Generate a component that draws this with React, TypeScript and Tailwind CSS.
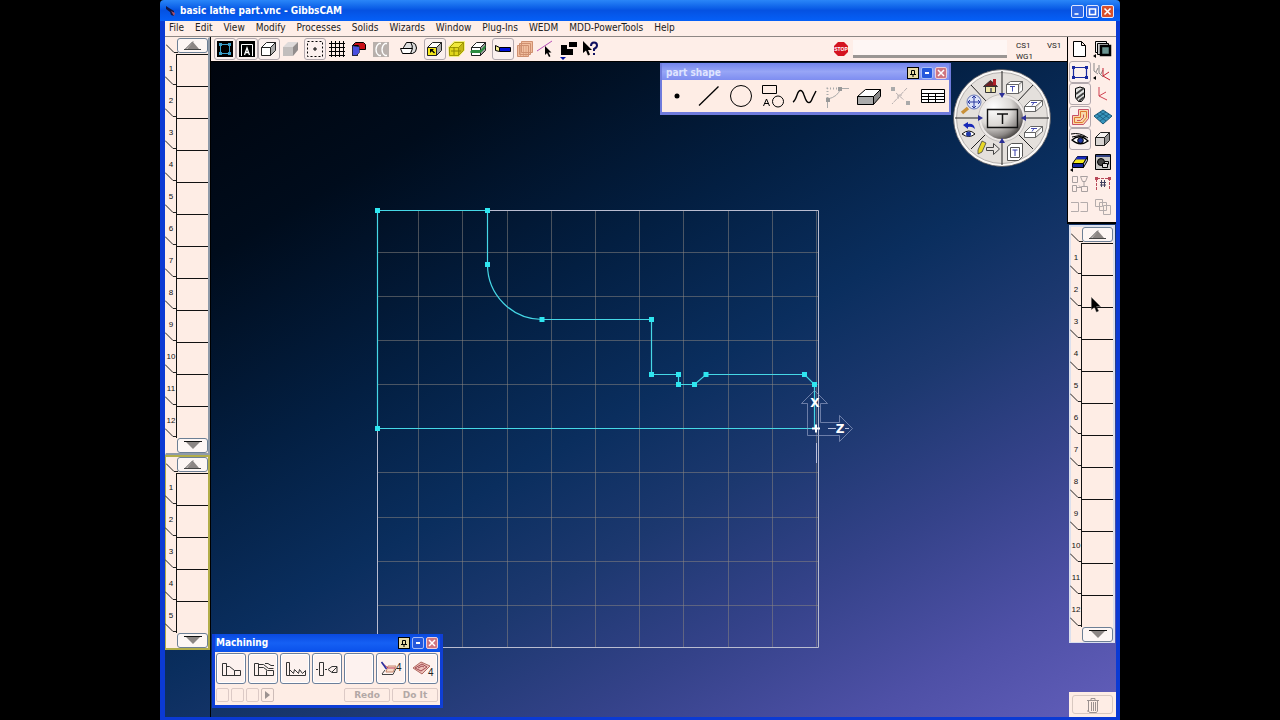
import type { ReactNode } from "react";

const MENUS = ["File", "Edit", "View", "Modify", "Processes", "Solids", "Wizards", "Window", "Plug-Ins", "WEDM", "MDD-PowerTools", "Help"];

type Tool = { name: string; art: ReactNode; on?: boolean };

function Art({ children, size = 22 }: { children: ReactNode; size?: number }) {
  return (
    <svg viewBox={`0 0 ${size} ${size}`} width={size} height={size} fill="none" stroke="#000" strokeWidth="1" className="block shrink-0" aria-hidden="true">
      {children}
    </svg>
  );
}

const Cube = ({ front = "#fff", top = "#fff", side = "#aaa", line = "#222" }: { front?: string; top?: string; side?: string; line?: string }) => (
  <g stroke={line} strokeLinejoin="round">
    <path d="M3.500 9.500h9v8h-9z" fill={front} />
    <path d="M3.500 9.500l5-5h9l-5 5z" fill={top} />
    <path d="M12.500 9.500l5-5v8l-5 5z" fill={side} />
  </g>
);

const GROUPS: { gap: string; tools: Tool[] }[] = [
  {
    gap: "",
    tools: [
      {
        name: "Workgroup geometry", on: true,
        art: (<><path d="M3 3h16v16H3z" fill="#000" stroke="none" /><path d="M6.500 6.500h9v9h-9z" stroke="#3aa0cc" /><path d="M5 5h3v3H5zM14 5h3v3h-3zM5 14h3v3H5zM14 14h3v3h-3z" fill="#3aa0cc" stroke="none" /></>),
      },
      {
        name: "Labels", on: true,
        art: (<><path d="M3 3h16v16H3z" fill="#000" stroke="none" /><path d="M5.500 18V6.500h11V18" stroke="#fff" /><path d="M8.500 17l2.500-7 2.500 7M9.500 14.500h3" stroke="#fff" strokeWidth="1.300" /></>),
      },
      { name: "Show solids", on: true, art: <Cube /> },
      { name: "Render solids", art: (<g stroke="none"><path d="M3 9h10v9H3z" fill="#c2bebd" /><path d="M3 9l5-5h10l-5 5z" fill="#dedada" /><path d="M13 9l5-5v8l-5 6z" fill="#918c8c" /></g>) },
    ],
  },
  {
    gap: "ml-0.5",
    tools: [
      { name: "Show points", on: true, art: (<><path d="M3.500 3.500h15v15h-15z" strokeDasharray="2 2" /><path d="M11 9v4M9 11h4" /></>) },
      { name: "Grid", art: <path d="M3 5.500h16M3 9.500h16M3 13.500h16M3 17.500h16M5.500 3v16M9.500 3v16M13.500 3v16M17.500 3v16" /> },
      { name: "Boolean", art: (<><path d="M4.500 7.500h5v10h-5z" fill="#3a40d8" /><path d="M4.500 7.500l3-3h8l2 2v5h-7v-4z" fill="#c81018" /><path d="M7.500 8.500h4v6l-3 3h-4v-10z" fill="#4a50e0" stroke="#222" strokeWidth=".6" /></>) },
      { name: "Threads", art: (<><path d="M3 4h16v15H3z" fill="#b8b0ac" stroke="none" /><path d="M17 5.500h-2q-3 2-3 6t3 6h2M11 5.500H9q-3 2-3 6t3 6h2" stroke="#fff" strokeWidth="1.300" /></>) },
    ],
  },
  { gap: "ml-1.5", tools: [{ name: "Chuck", art: (<><path d="M5.500 9.500l3-5h6q4 1 4 5.500t-4 5.500h-3z" fill="#ddd" /><path d="M13 5q2 3 1 6" /><path d="M2.500 10.500h12l-2 5h-8z" fill="#fff" /></>) }] },
  {
    gap: "ml-1",
    tools: [
      { name: "Face select", on: true, art: (<><Cube front="#f4e81c" /><path d="M6 11h4l-1.300 1.300 2.300 2.200-1 1-2.200-2.300L6 15z" fill="#000" stroke="none" /></>) },
      { name: "Highlight", art: (<><path d="M2 9l6-6h11v9l-6 7H3z" fill="#f3f080" stroke="none" /><Cube front="#e0d61c" top="#f0e83c" side="#c4b814" line="#a09800" /><path d="M5 13h10M8 9v8" stroke="#908800" /></>) },
      { name: "Slice", art: (<><Cube side="#999" /><path d="M2 14l1.500-2h9l5-5v3l-5 5H3z" fill="#2c8c40" stroke="none" /></>) },
    ],
  },
  {
    gap: "ml-0.5",
    tools: [
      { name: "Tool display", on: true, art: (<><path d="M7.500 9.500h11v4h-11z" fill="#0010d8" /><path d="M3.500 7.500l4 2v4l-4-1z" fill="#f4ee90" /></>) },
      { name: "Layers", art: (<g stroke="#cf9070" fill="#f2bf9f"><path d="M7.500 3.500h11v11h-11zM5.500 5.500h11v11h-11zM3.500 7.500h11v11h-11z" /><path d="M6.500 8v10M9.500 8v10M12 8v10" strokeWidth=".6" /></g>) },
      { name: "Pick edge", art: (<><path d="M1 13L16 3" stroke="#b850b8" /><path d="M9 8v9l2-2 2 4 1.500-.8-2-3.700h3z" fill="#000" stroke="none" /></>) },
      { name: "Machine setup", art: (<><path d="M3 7h6v4h6v6H3zM11 4h8v5h-8z" fill="#000" stroke="none" /><path d="M2 19h6l-3 3z" fill="#0010a0" stroke="none" /></>) },
      { name: "Context help", art: (<><path d="M3 3v12l3-2.500 2 5 2-1-2-4.500h4z" fill="#000" stroke="none" /><path d="M11 8q0-3.500 3-3.500t3 3q0 2-3 3.500v2M14 15v2" stroke="#101060" strokeWidth="2" /></>) },
    ],
  },
];

const SIDE_TOOLS: Tool[] = [
  { name: "Documents", art: <path d="M4.500 3.500h8l4 4v11h-12zM12.500 3.500v4h4" fill="#fff" /> },
  { name: "Workgroups", art: (<><path d="M3.500 3.500h11v11h-11z" fill="#eee" /><path d="M5.500 5.500h11v11h-11z" fill="#ccc" /><path d="M9 8h9v9H9z" fill="#6a9490" strokeWidth="2.500" /><path d="M1 18l3-2v4z" fill="#000" stroke="none" /></>) },
  { name: "Geometry", on: true, art: (<g stroke="#1828a0"><path d="M4.500 6.500h13v10h-13z" strokeWidth="1.200" /><path d="M3 5h3v3H3zM16 5h3v3h-3zM3 15h3v3H3zM16 15h3v3h-3z" fill="#1828a0" stroke="none" /></g>) },
  { name: "Coordinate systems", art: (<><path d="M2 2v8l4 3M7 4v8l4 4M4 11l2-4M9 13l2-4" stroke="#888" /><path d="M11 7v8l7 4M11 15l6-4" stroke="#c42030" /><path d="M1 17l3-2v4z" fill="#000" stroke="none" /></>) },
  { name: "Tools", on: true, art: (<><path d="M6.500 5.500q4.500-3 9 0v9l-3 4h-3l-3-4z" fill="#e4e4e4" /><path d="M7 11l8-6M7 16l8-6M10 18l5-4" stroke="#444" strokeWidth="2" /></>) },
  { name: "Coordinate system", art: <path d="M7 4v9l8 4M7 13l7-4" stroke="#d04050" /> },
  { name: "Create operations", on: true, art: (<><path d="M3.500 9.500h6v-6h10v9l-5 6h-11z" fill="#f8d8a8" stroke="#c85068" /><path d="M5.500 16.500v-5h6v-6h6v6l-4 5z" stroke="#e07830" /><path d="M8 14.500h3.500l3-3v-3" stroke="#c85068" /></>) },
  { name: "Surface grid", art: (<><path d="M11 4l9 6-9 8-9-8z" fill="#3894bc" stroke="#185878" /><path d="M8 6l9 6M5 8l9 7M14 6l-9 6M17 8l-9 7" stroke="#185878" strokeWidth=".8" /></>) },
  { name: "Render", on: true, art: (<><path d="M3 12q8-7 16 1-8 6-16-1z" fill="#fff" strokeWidth="1.300" /><circle cx="11.500" cy="12.500" r="2.800" fill="#2438a0" /><path d="M2 6q9-2 17 4M3 9q8-3 14 0" /></>) },
  { name: "Stock", art: <Cube side="#909090" front="#d8d4d2" top="#f4f2f0" /> },
  { name: "Simulation", art: (<><path d="M3.500 12.500l5-7h10l-4 7z" fill="#f4e81c" /><path d="M8.500 5.500h10l-2 3h-10z" fill="#1828c0" stroke="none" /><path d="M3.500 12.500h11v4h-11z" fill="#1828a0" /><path d="M14.500 12.500l4-7v4l-4 7z" fill="#b0b8d8" /><path d="M1 19l3-2v4z" fill="#000" stroke="none" /></>) },
  { name: "Post", art: (<><path d="M3.500 3.500h15v15h-15z" fill="#c8c6c4" /><path d="M4 5h14" stroke="#304080" strokeWidth="2" /><circle cx="9" cy="11" r="3.500" fill="#444" /><path d="M10.500 12.500h5v4h-5zM12.500 10.500h4v3" fill="#ddd" /></>) },
  { name: "Convert", art: <path d="M3.500 3.500h5v6h-5zM11.500 3.500h7l-2 5h-3zM3.500 12.500h4v6h-4zM12.500 13.500h6v5h-6zM8 14.500h4l-2-2M15 9v4" stroke="#a8a0a0" /> },
  { name: "Dimensions", art: (<><path d="M4.500 17V5.500h13V17" stroke="#b84858" strokeDasharray="3 1" /><path d="M3 4h3v3H3zM16 4h3v3h-3z" fill="#b84858" stroke="none" /><path d="M9.500 7v7M12.500 7v7M8 9.500h6M8 12h6" stroke="#404060" /></>) },
  { name: "Split view", art: <path d="M2 6.500h7.500v9H2M11.500 6.500h7v9h-7" stroke="#b4acac" /> },
  { name: "Copies", art: <path d="M3.500 3.500h7v7h-7zM7.500 6.500h7v8h-7zM11.500 9.500h7v9h-7z" stroke="#b4acac" fill="#fdeee6" /> },
];

const SHAPE_TOOLS: Tool[] = [
  { name: "Point", art: <circle cx="14" cy="14" r="2.500" fill="#000" stroke="none" /> },
  { name: "Line", art: <path d="M4 23.500L23.500 4.500" strokeWidth="1.300" /> },
  { name: "Circle", art: <circle cx="14" cy="14" r="10.500" /> },
  { name: "Shapes", art: (<><path d="M3.500 3.500h14v8h-14z" /><path d="M4.500 24l3-7 3 7M5.500 21.500h4" /><circle cx="19" cy="19.500" r="5.500" /></>) },
  { name: "Curve", art: <path d="M2 20q2-1 4-7c2-6 5-6 7 0l1.500 4c2 5 5 5 7-1L25 9" strokeWidth="1.400" /> },
  { name: "Fillet", art: (<><path d="M4.500 26V17Q15 15 17.500 6.500H26" stroke="#aaa" /><path d="M4.500 16V6.500H16" stroke="#aaa" strokeDasharray="1 2" strokeWidth="2" /><path d="M3 16h4v4H3zM15 5h4v4h-4z" fill="#999" stroke="none" /></>) },
  { name: "Solid", art: (<><path d="M2.500 14.500h16v8h-16z" fill="#aaa" /><path d="M2.500 14.500l8-7h15l-7 7z" fill="#fff" /><path d="M18.500 14.500l7-7v7l-7 8z" fill="#888" /></>) },
  { name: "Trim", art: (<><path d="M20 6L5 22M9 11l8 7M11 17v-4h4" stroke="#b8b0b0" strokeDasharray="4 1" /><path d="M4 5h4v4H4zM19 19h4v4h-4z" fill="#aaa" stroke="none" /></>) },
  { name: "Table", art: (<><path d="M2.500 7.500h23v13h-23z" fill="#fff" /><path d="M2 11.500h24M2 14.500h24M2 17.500h24M9.500 11v9M16.500 11v9" /></>) },
];

const MACHINING: Tool[] = [
  { name: "Contour", art: <path d="M5.500 20.500v-12h4v12zM9.500 11.500h3l5 4h6v5h-18M17.500 15.500v5" stroke="#333" /> },
  { name: "Rough", art: <path d="M5.500 20.500v-12h4v12zM9.500 9.500h5l5 4h5M9.500 12.500h5l4 3h6v5h-19M16 8.500h3l3 2h3M17.500 15.500v5" stroke="#333" /> },
  { name: "Thread", art: <path d="M5.500 20.500v-13h3v13zM8.500 14.500l4 4 1-4 4 4 1-4 3 4 3-3v5h-18" stroke="#333" /> },
  { name: "Drill", art: <path d="M6.500 7.500h4v13h-4zM3 14.500h2M12 14.500h2M15 14.500l4-3h5v6h-5zM19 17l5-5" stroke="#333" /> },
  { name: "Empty", art: null },
  { name: "Mill contour", art: (<><path d="M11 11h8l-3 6H9z" fill="#f8dcc8" stroke="#c88870" /><path d="M5 8l6 5h7" stroke="#c04060" /><path d="M4.500 7l5 7" stroke="#2830a0" strokeWidth="1.600" /><path d="M5 19.500h11l3-6M5 19l3-4" stroke="#444" /><text x="19" y="16" fontSize="10" fill="#222" stroke="none" fontFamily="Liberation Sans, sans-serif">4</text></>) },
  { name: "Mill rough", art: (<><path d="M4 13l8-6 9 4-8 8z" fill="#eec0b8" stroke="#b06860" /><path d="M6 13l7-4 5 3-6 4zM9 13l4-2 2 1" stroke="#a04850" /><text x="19" y="21" fontSize="10" fill="#222" stroke="none" fontFamily="Liberation Sans, sans-serif">4</text></>) },
];

function ToolButton({ tool }: { tool: Tool }) {
  return (
    <button
      type="button"
      aria-label={tool.name}
      className={`flex h-[22px] w-[22px] items-center justify-center rounded-[3px] border ${tool.on ? "border-[#b3a9ae] bg-[#fbf0ee]" : "border-transparent"}`}
    >
      <Art>{tool.art}</Art>
    </button>
  );
}

function ScrollButton({ down = false }: { down?: boolean }) {
  return (
    <button type="button" aria-label={down ? "Scroll down" : "Scroll up"} className="flex h-[15px] w-full items-center justify-center rounded-[3px] border border-[#6c7f95] bg-[#fdf6f4]">
      <svg viewBox="0 0 18 9" width="18" height="9" aria-hidden="true">
        {down ? (
          <><path d="M2 1h14L9 8z" fill="#8c8684" /><path d="M0 .500h18" stroke="#111" /></>
        ) : (
          <><path d="M3 8h12L9 1z" fill="#8c8684" /><path d="M1 8.500L9 .500M0 8.500h17" stroke="#444" fill="none" /></>
        )}
      </svg>
    </button>
  );
}

function TabEdge() {
  return (
    <svg viewBox="0 0 12 10" width="12" height="10" fill="none" stroke="#222" className="block" aria-hidden="true">
      <path d="M0 .500l8 8h4" />
    </svg>
  );
}

function TileList({ count, name, frame }: { count: number; name: string; frame: string }) {
  return (
    <section aria-label={name} className={`bg-[#feede5] ${frame}`}>
      <div className="flex h-4">
        <div className="flex w-2.5 shrink-0 flex-col justify-end"><TabEdge /></div>
        <div className="flex-1 pl-px"><ScrollButton /></div>
      </div>
      <ol>
        {Array.from({ length: count }, (_, i) => (
          <li key={i} className="flex h-8">
            <div className="flex w-2.5 shrink-0 flex-col items-center justify-between">
              <span className="pt-2.5 font-['Liberation_Sans',sans-serif] text-[8px] leading-[10px] text-[#111]">{i + 1}</span>
              <TabEdge />
            </div>
            <button type="button" aria-label={`${name} ${i + 1}`} className="flex-1 border-t border-l border-[#111]" />
          </li>
        ))}
      </ol>
      <div className="pl-[11px]"><ScrollButton down /></div>
    </section>
  );
}

function PaletteControls() {
  return (
    <div className="flex gap-0.5">
      <button type="button" aria-label="Pin" className="flex h-3 w-3 items-center justify-center border border-black bg-[#e9dba6]">
        <svg viewBox="0 0 8 8" width="8" height="8" fill="none" stroke="#000" aria-hidden="true"><path d="M1 5.500h6M2.500 5V1.500h3V5M4 6v2" /></svg>
      </button>
      <button type="button" aria-label="Minimize" className="flex h-3 w-3 items-center justify-center rounded-xs border border-[#a9bdf5] bg-[#2458dc]">
        <span className="h-0.5 w-1 bg-white" />
      </button>
      <button type="button" aria-label="Close" className="flex h-3 w-3 items-center justify-center rounded-xs border border-[#f0d0d8] bg-[#cf7580]">
        <svg viewBox="0 0 8 8" width="8" height="8" stroke="#fff" strokeWidth="1.500" aria-hidden="true"><path d="M1 1l6 6M7 1L1 7" /></svg>
      </button>
    </div>
  );
}

const POINTS = [[377.5, 210.500], [487.500, 210.500], [487.500, 264.500], [542, 319.500], [651.500, 319.500], [651.500, 374.500], [678.500, 374.500], [678.500, 384.500], [694.500, 384.500], [706, 374.500], [804.500, 374.500], [814.500, 384.500], [377.500, 428.500]];
const COLS = [418, 462, 507, 551, 595, 639, 683, 728, 772, 816];
const ROWS = [252, 296, 340, 384, 428, 472, 517, 561, 605];

function PartView() {
  return (
    <svg viewBox="211 62 856 655" className="absolute inset-0 h-full w-full" fill="none" role="img" aria-label="Lathe part profile">
      <g stroke="#8c8680" strokeOpacity=".52">
        {COLS.map((x) => <path key={x} d={`M${x}.500 210V648`} />)}
        {ROWS.map((y) => <path key={y} d={`M377 ${y}.500H818`} />)}
      </g>
      <path d="M377.500 210.500H818.500V647.500H377.500z" stroke="#b9bcd0" />
      <path d="M816.500 443v20" stroke="#b9bdd8" />
      <path d="M377.500 428.500V210.500H487.500V264.500A55 55 0 0 0 542 319.500H651.500V374.500H678.500V384.500H694.500L706 374.500H804.500L814.500 384.500V428.500z" stroke="#46d8e6" strokeWidth="1.200" />
      <g fill="#2fe6f0">
        {POINTS.map(([x, y]) => <rect key={`${x}-${y}`} x={x - 2.5} y={y - 2.5} width="5" height="5" />)}
      </g>
      <path d="M807.500 435.500V403.500H801.500L814.500 390.500L827.500 403.500H820.500V422.500H839.500V415.500L852.500 428.500L839.500 441.500V435.500z" stroke="#98a4c8" strokeOpacity=".65" />
      <path d="M828 428.500h8M845 428.500h4" stroke="#b8c0dc" />
      <path d="M812 428.500h8M816 424.500v8" stroke="#fff" strokeWidth="2" />
      <g fill="#fff" fontFamily="DejaVu Sans, sans-serif" fontWeight="700" fontSize="12" textAnchor="middle">
        <text x="815" y="407">X</text>
        <text x="840" y="433">Z</text>
      </g>
    </svg>
  );
}

function MiniBox({ x, y, label }: { x: number; y: number; label: "front" | "top" }) {
  return (
    <g transform={`translate(${x} ${y})`} stroke="#555" strokeWidth=".9">
      {label === "front" ? (
        <>
          <path d="M.500 3.500h12v9H.500zM.500 3.500l4-3h12l-4 3M12.500 12.500l4-3v-9" fill="#fff" />
          <path d="M4 5.500h5M6.500 5.500v5" stroke="#3038a8" />
        </>
      ) : (
        <>
          <path d="M.500 7.500h11v5H.500zM.500 7.500l6-6h12l-7 6M11.500 12.500l7-6v-5" fill="#fff" />
          <path d="M7 3.500h6M10 3.500l-2 3" stroke="#3038a8" />
        </>
      )}
    </g>
  );
}

function ViewWheel() {
  return (
    <button type="button" aria-label="View control" className="absolute top-1.5 right-[15px] rounded-full">
      <svg viewBox="0 0 100 100" width="100" height="100" fill="none" className="block" aria-hidden="true">
        <defs>
          <radialGradient id="ball" cx="30%" cy="25%" r="85%">
            <stop offset="0" stopColor="#fff" />
            <stop offset=".5" stopColor="#dcd9d6" />
            <stop offset=".8" stopColor="#8c8886" />
            <stop offset="1" stopColor="#383432" />
          </radialGradient>
        </defs>
        <circle cx="50" cy="50" r="48.500" fill="#faf8f6" stroke="#4a4a50" strokeWidth=".8" />
        <circle cx="50" cy="50" r="45.500" fill="#e4e0dc" stroke="#b4b0ae" />
        <path d="M50 3v24M50 73v24M3 50h24M73 50h24M19 17l15 16M81 17L66 33M19 81l15-15M81 81L66 66" stroke="#222" />
        <circle cx="50" cy="50" r="23.500" fill="#eeeae8" stroke="#c4c0be" />
        <circle cx="50" cy="50" r="21" fill="url(#ball)" />
        <path d="M47 25h6l-3 5zM47 75h6l-3-5zM26 47v6l5-3zM74 47v6l-5-3z" fill="#2c3098" />
        <path d="M35.500 41.500h30v18h-30z" stroke="#111" strokeWidth="1.400" />
        <path d="M45 46h11M50.500 46v10" stroke="#111" strokeWidth="1.500" />
        <MiniBox x={54} y={13} label="front" />
        <MiniBox x={72} y={31} label="top" />
        <MiniBox x={72} y={57} label="top" />
        <path d="M55.500 78.500l4-3h11v13l-4 4h-11z" fill="#fff" stroke="#555" />
        <path d="M58.500 79.500h9v10h-9z" stroke="#555" />
        <path d="M60.500 82h5M63 82v6" stroke="#3038a8" />
        <path d="M33.500 18.500h10v6h-10z" fill="#f0e8a8" stroke="#333" />
        <path d="M31.500 18.500l7-6 7 6z" fill="#6c2024" stroke="#333" />
        <path d="M41 11h3v6h-3z" fill="#b02028" />
        <path d="M38 20h2v4h-2z" fill="#777" />
        <circle cx="22" cy="34" r="7" fill="#dde4f8" stroke="#6878b8" />
        <path d="M22 28v12M16 34h12M20 30l2-2 2 2M20 38l2 2 2-2M18 32l-2 2 2 2M26 32l2 2-2 2" stroke="#2838a0" />
        <path d="M16 40l-6 5" stroke="#c89038" strokeWidth="3.500" />
        <path d="M10 66q7-6 13 0-6 5-13 0z" fill="#fff" stroke="#111" />
        <circle cx="16.500" cy="66" r="2.500" fill="#2038a8" />
        <path d="M11 57l5-3v2q6-1 7 5-3-3-7-2v2z" fill="#1828b8" />
        <path d="M26 82l4-9 4 2-4 9-4 2z" fill="#e8d828" stroke="#444" strokeWidth=".8" />
        <path d="M34.500 79.500h7v-4l6 5.500-6 5.500v-4h-7z" fill="#e8e4e0" stroke="#444" />
      </svg>
    </button>
  );
}

function PartShapePalette() {
  return (
    <section className="absolute top-px right-[116px] border-2 border-t-0 border-b-3 border-[#6f7bdc] bg-[#feede5]">
      <header className="flex h-[17px] items-center justify-between bg-linear-to-b from-[#7384ec] via-[#97a5f6] to-[#7e8df0] pt-0.5 pr-0.5 pl-1">
        <h2 className="text-[10px] leading-3 font-bold text-[#dfe4ff]">part shape</h2>
        <PaletteControls />
      </header>
      <div className="flex h-8 items-center gap-1 pr-0.5 pl-px">
        {SHAPE_TOOLS.map((t) => (
          <button key={t.name} type="button" aria-label={t.name} className="h-7 w-7"><Art size={28}>{t.art}</Art></button>
        ))}
      </div>
    </section>
  );
}

function MachiningPalette() {
  return (
    <section className="absolute bottom-[9px] left-px border-3 border-t-0 border-[#0f3fd6] bg-[#feede5]">
      <header className="flex h-[18px] items-center justify-between bg-linear-to-b from-[#0a49e0] via-[#1560f4] to-[#0a50ea] pr-0.5 pl-px">
        <h2 className="text-[10px] leading-3 font-bold text-white">Machining</h2>
        <PaletteControls />
      </header>
      <div className="flex gap-0.5 py-px pr-0.5 pl-px">
        {MACHINING.map((t) => (
          <button key={t.name} type="button" aria-label={t.name} className="flex h-[31px] w-[30px] items-center justify-center overflow-hidden rounded-[3px] border border-[#6b7f9b] bg-[#fdf2ef] shadow-[inset_0_0_0_1px_#ffffff]">
            <Art size={28}>{t.art}</Art>
          </button>
        ))}
      </div>
      <div className="flex gap-0.5 py-[3px] pr-0.5 pl-px">
        {["Step 1", "Step 2", "Step 3"].map((n) => (
          <button key={n} type="button" aria-label={n} className="h-3.5 w-[13px] rounded-xs border border-[#dccac6]" />
        ))}
        <button type="button" aria-label="Next" className="flex h-3.5 w-[13px] items-center justify-center rounded-xs border border-[#cdbcb8]">
          <svg viewBox="0 0 5 8" width="5" height="8" aria-hidden="true"><path d="M0 0l5 4-5 4z" fill="#9c9290" /></svg>
        </button>
        <button type="button" className="ml-auto h-3.5 w-[46px] rounded-xs border border-[#dccac6] font-['DejaVu_Sans',sans-serif] text-[9px] leading-3 font-bold text-[#b3a8a6]">Redo</button>
        <button type="button" className="h-3.5 w-[46px] rounded-xs border border-[#dccac6] font-['DejaVu_Sans',sans-serif] text-[9px] leading-3 font-bold text-[#b3a8a6]">Do It</button>
      </div>
    </section>
  );
}

function WindowButton({ name, tone, d }: { name: string; tone: string; d: string }) {
  return (
    <button type="button" aria-label={name} className={`flex h-[13px] w-[13px] items-center justify-center rounded-xs border border-[#dfe6ff] ${tone}`}>
      <svg viewBox="0 0 9 9" width="9" height="9" fill="none" stroke="#fff" strokeWidth="1.600" aria-hidden="true"><path d={d} /></svg>
    </button>
  );
}

export default function App() {
  return (
    <div className="flex min-h-screen justify-center bg-black font-['DejaVu_Sans_Condensed','DejaVu_Sans',sans-serif]">
      <div className="flex w-3/4 flex-col">
        <header className="flex h-[21px] items-center justify-between rounded-t-sm bg-linear-to-b from-[#2a86f8] via-[#0552e2] to-[#0560f8] pt-px pr-1.5 pl-1.5">
          <div className="flex items-center gap-1">
            <svg viewBox="0 0 10 12" width="10" height="12" aria-hidden="true"><path d="M0 1l3 2 5 3v5l-3-1-1-3-4-3z" fill="#10184c" /><path d="M5 6l4 2-1 3z" fill="#b05068" /></svg>
            <h1 className="text-[10px] leading-3 font-bold text-white">basic lathe part.vnc - GibbsCAM</h1>
          </div>
          <div className="flex gap-0.5">
            <WindowButton name="Minimize" tone="bg-[#2f68e4]" d="M1.500 7h4" />
            <WindowButton name="Maximize" tone="bg-[#2f68e4]" d="M1.500 2h6v5.500h-6z" />
            <WindowButton name="Close" tone="bg-[#d8502c]" d="M1.500 1.500l6 6M7.500 1.500l-6 6" />
          </div>
        </header>
        <div className="flex flex-1 flex-col border-r-4 border-b-3 border-l-5 border-[#0b3ad4]">
          <nav className="flex h-4 items-center gap-[11px] border-b border-[#8e8784] bg-[#feeee8] pb-0.5 pl-1">
            {MENUS.map((m) => (
              <button key={m} type="button" className="text-[10px] leading-3 whitespace-nowrap text-[#222]">{m}</button>
            ))}
          </nav>
          <div className="flex flex-1 bg-[linear-gradient(150deg,#00030a_0%,#000c1c_20%,#031f42_38%,#0a2e5e_52%,#1c386f_63%,#344289_75%,#4e50a6_88%,#625eba_100%)]">
            <aside className="flex w-[46px] shrink-0 flex-col border-r border-black">
              <TileList count={12} name="Tool" frame="border-t border-l border-r-2 border-b-2 border-t-[#feede5] border-l-[#feede5] border-r-[#8f9aa8] border-b-[#8f9aa8]" />
              <TileList count={5} name="Operation" frame="border-y-2 border-r-2 border-l border-[#b2ad4a]" />
            </aside>
            <div className="flex min-w-0 flex-1 flex-col">
              <div className="flex h-[25px] shrink-0 items-center border-b border-black bg-[#feeee8] pl-[3px]">
                {GROUPS.map((g, i) => (
                  <div key={i} className={`flex ${g.gap}`}>
                    {g.tools.map((t) => <ToolButton key={t.name} tool={t} />)}
                  </div>
                ))}
                <div className="ml-auto flex items-center">
                  <button type="button" className="flex h-4 w-4 items-center justify-center" aria-label="Stop">
                    <svg viewBox="0 0 16 16" width="16" height="16" aria-hidden="true">
                      <path d="M5 1h6l4 4v6l-4 4H5l-4-4V5z" fill="#d41420" />
                      <text x="8" y="10" textAnchor="middle" fontSize="5" fontWeight="700" fill="#fff" fontFamily="Liberation Sans, sans-serif">STOP</text>
                    </svg>
                  </button>
                  <div className="ml-1 h-[18px] w-[154px] border-b-3 border-[#9a9694] bg-[#fef6f4]" />
                  <div className="ml-[9px] grid w-[51px] grid-cols-[31px_auto] pt-1 font-[Roboto,sans-serif] text-[8px] leading-[11px] text-[#222]">
                    <span>CS1</span><span>VS1</span><span>WG1</span>
                  </div>
                </div>
              </div>
              <main className="relative flex-1">
                <PartView />
                <PartShapePalette />
                <ViewWheel />
                <MachiningPalette />
              </main>
            </div>
            <aside className="relative flex w-[49px] shrink-0 flex-col">
              <div className="border-b-2 border-l border-black bg-[#feeee8] pt-px pr-0.5 pb-1">
                <div className="grid h-[180px] grid-cols-2 grid-rows-8 items-center justify-items-center">
                  {SIDE_TOOLS.map((t) => <ToolButton key={t.name} tool={t} />)}
                </div>
              </div>
              <div className="pt-px pr-px pl-0.5">
                <TileList count={12} name="Process" frame="border-2 border-b-1 border-[#dbe0ee]" />
              </div>
              <div className="mt-auto ml-0.5 bg-[#feede5] p-[3px]">
                <button type="button" aria-label="Trash" className="flex h-[19px] w-full items-center justify-center rounded-[3px] border border-[#d8c8c0]">
                  <svg viewBox="0 0 16 16" width="16" height="16" fill="none" stroke="#9c9290" aria-hidden="true"><path d="M2 3.500h12M6 3V1.500h4V3M3.500 4v10l1 1.500h7l1-1.500V4M6.500 5v9M8.500 5v9M10.500 5v9M2 14h2" /></svg>
                </button>
              </div>
              <svg viewBox="0 0 10 16" width="10" height="16" className="absolute top-[260px] left-6" aria-hidden="true"><path d="M.500.500v12l3-2.500 2 5 2-1-2-4.500h4z" fill="#000" stroke="#555" strokeWidth=".5" /></svg>
            </aside>
          </div>
        </div>
      </div>
    </div>
  );
}
